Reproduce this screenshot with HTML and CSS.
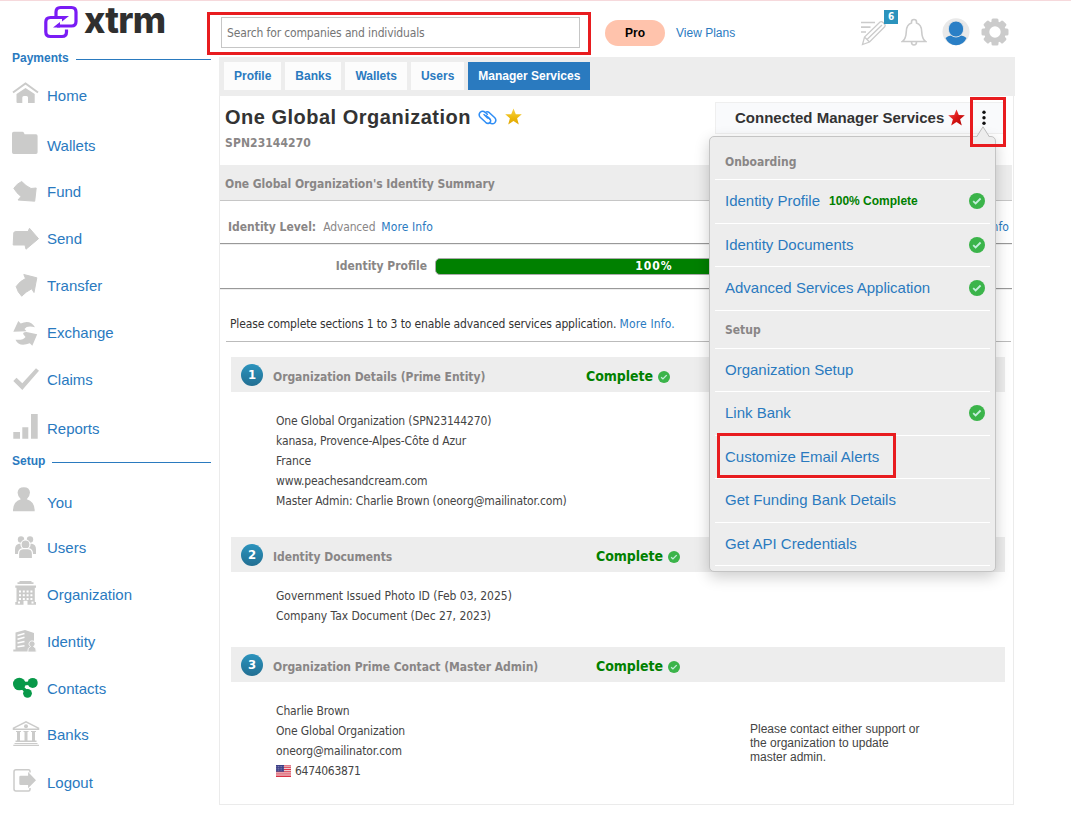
FILE: index.html
```html
<!DOCTYPE html>
<html lang="en">
<head>
<meta charset="utf-8">
<title>XTRM - Manager Services</title>
<link rel="stylesheet" href="styles.css">
</head>
<body>
<svg class="defs" aria-hidden="true">
  <symbol id="ok" viewBox="0 0 16 16"><circle cx="8" cy="8" r="8" fill="#3bb44a"/><path d="M4.2 8.2l2.4 2.3 5-5" fill="none" stroke="#c4eedb" stroke-width="1.8"/></symbol>
</svg>
<div class="page">
  <aside class="side">
    <div class="logo">
      <svg width="36" height="34" viewBox="0 0 36 34" fill="none" stroke="#7a1cf5" stroke-width="3.2"><path d="M13 11V7Q13 2.500 17.500 2.500H28.500Q33 2.500 33 7V16.500Q33 21 28.500 21H14"/><path d="M23.500 24.500V27Q23.500 31.500 19 31.500H7.500Q2.800 31.500 2.800 27V17Q2.800 12.500 7.500 12.500H22"/><path d="M10 22.500L17 17v5.500zM26 11L19 16.500V11z" fill="#7a1cf5" stroke="none"/></svg>
      <span class="brand">xtrm</span>
    </div>
    <h2 class="group"><span>Payments</span></h2>
    <ul class="nav">
      <li class="first"><svg viewBox="0 0 30 40"><path d="M3 16.500L15.500 7.500 28 16.500" fill="none" stroke="#cbcbca" stroke-width="2"/><path d="M6.500 18L15.500 12l9.200 6v9H18v-5.500q0-1.500-1.500-1.500h-2.700q-1.500 0-1.500 1.500V27H7.500q-1 0-1-1z"/></svg><a>Home</a></li>
      <li class="gap10"><svg viewBox="0 0 30 40"><path d="M2 7.500q0-1.700 1.700-1.700h8.800q1 0 1.500 1.200l.6 1.200h11.400q1.600 0 1.600 1.700v16.300q0 1.800-1.600 1.800H3.700Q2 28 2 26.200z"/></svg><a>Wallets</a></li>
      <li class="gap6"><svg viewBox="0 0 30 40"><path class="soft" d="M3.800 16.300Q7 11.500 11.700 9.500q4 4.500 9.300 7l5.200-.5-1.500 13.200L8 28l3-3.500Q6.500 21 3.800 16.300z"/></svg><a>Fund</a></li>
      <li><svg viewBox="0 0 30 40"><path class="soft" d="M3.800 13.500l1.500-1H18l1.500-3.200L28.500 19.700 16 30.200 15 26H3.200z"/></svg><a>Send</a></li>
      <li><svg viewBox="0 0 30 40"><path class="soft" d="M6.200 20.500Q10 15 15.500 12.500l-1.700-4 13 3.300L24 26.500l-2.300-3.700q-6 3-10 7.400Q7.500 26 6.200 20.500z"/></svg><a>Transfer</a></li>
      <li><svg viewBox="0 0 30 40"><path d="M3.300 18.700L8.300 8l2.400 2.500Q20 6 25 14.300q-8-2-10.500 1.700l2 2.200z"/><path d="M27.200 21.300L22.300 32.700l-2.500-2.400Q9 34.500 5.500 26.700 13 27.500 15.500 24l-2-2.500q-1.500-2.500 3-2.500z"/></svg><a>Exchange</a></li>
      <li><svg viewBox="0 0 30 40"><path d="M3.300 21l3.200-3.300 5.800 5.600L26 8.300l3 2.500L12.300 30z"/></svg><a>Claims</a></li>
      <li class="gap9"><svg viewBox="0 0 30 40"><path d="M3.300 23H10v6.700H3.300zM12.300 18.300h6v11.400h-6zM21 5h6.700v24.700H21z"/></svg><a>Reports</a></li>
    </ul>
    <h2 class="group setup"><span>Setup</span></h2>
    <ul class="nav">
      <li class="first2"><svg viewBox="0 0 30 40"><path d="M3 28.300Q2.800 18.500 10.800 16.300 7.500 13 7.600 9.500 8 4.300 13.800 4.200q5.800.1 6.200 5.300 0 3.500-3.200 6.800 8 2.200 7.900 12z"/></svg><a>You</a></li>
      <li class="gap5"><svg viewBox="0 0 30 40"><circle cx="11" cy="11.500" r="3.200"/><circle cx="20" cy="11.500" r="3.200"/><path d="M5 26v-4.500q0-5 4-5.800h13q4 .8 4 5.800V26z"/><circle cx="15.500" cy="16.500" r="4.500" stroke="#fff" stroke-width="1.200"/><path d="M8.500 30.500V26q0-5 4.500-5.300h5q4.500.3 4.500 5.300v4.500z" stroke="#fff" stroke-width="1.200"/></svg><a>Users</a></li>
      <li><svg viewBox="0 0 30 40"><path d="M9.500 6h12v1.200h2V9h-16V7.200h2z"/><path d="M5.300 10.500H26v2.200H5.300zM6.500 12.700h18.300v14.300H26v2.700H17.500v-4h-4v4H5.300V27h1.200z"/><path d="M9 15.500h2v2H9zm3.800 0h2v2h-2zm3.800 0h2v2h-2zm3.800 0h2v2h-2zM9 19.300h2v2H9zm3.800 0h2v2h-2zm3.800 0h2v2h-2zm3.800 0h2v2h-2zM9 23h2v2H9zm3.800 0h2v2h-2zm3.800 0h2v2h-2zm3.800 0h2v2h-2zM8 26.500h2v2H8zm13.500 0h2v2h-2z" fill="#fff"/></svg><a>Organization</a></li>
      <li><svg viewBox="0 0 30 40"><path d="M5.500 10.500L15 8l9 3v7.500l-3 2-1.500 9H3.300v-2h2.200z"/><path d="M7.500 13.500l7-2M7.500 17.200l7-2M7.500 21l7-1.500M7.500 24.800l7-1" stroke="#fff" stroke-width="1.500"/><path d="M17.800 30q-.3-4.500 2.700-5.500-2-1.500-1.500-3.300.8-2.400 3-2.400t3 2.400q.5 1.800-1.500 3.300 3 1 2.700 5.500z" stroke="#fff" stroke-width=".8"/></svg><a>Identity</a></li>
      <li><svg viewBox="0 0 30 40" class="green"><circle cx="9.300" cy="15" r="6.300"/><circle cx="22.700" cy="13.900" r="5"/><circle cx="17.500" cy="24.300" r="4.400"/><path d="M10 15l12-1M10.500 17l7 6.500" stroke="#089949" stroke-width="3.400"/></svg><a>Contacts</a></li>
      <li class="gap6"><svg viewBox="0 0 30 40"><path d="M3.500 13.200L16 6.800l12.500 6.400v1H3.500z" fill="none" stroke="#cbcbca" stroke-width="1.500"/><circle cx="16" cy="11.300" r="2"/><path d="M6 16h5v1H6zm7.500 0h5v1h-5zm7.500 0h5v1h-5zM7 17h3v8.500H7zm7.500 0h3v8.500h-3zm7.500 0h3v8.500h-3zM5.500 25.500h21V27h-21zM4.500 28h23v1h-23zM3.300 29.700H29V31H3.300z"/></svg><a>Banks</a></li>
      <li class="gap8"><svg viewBox="0 0 30 40"><path d="M20 9.500V8.300q0-1.500-1.500-1.500H6Q4 6.800 4 8.800V26q0 2 2 2h12.500q1.500 0 1.500-1.500V25" fill="none" stroke="#cbcbca" stroke-width="1.500"/><path d="M9.300 14q0-1.300 1.300-1.300h7.500V9L26 17.300l-7.900 8V22h-7.500q-1.300 0-1.300-1.300z"/></svg><a>Logout</a></li>
    </ul>
  </aside>
  <main class="main">
    <header class="top">
      <div class="search">Search for companies and individuals</div>
      <span class="plan">Pro</span>
      <a class="view">View Plans</a>
      <div class="tools">
        <div class="note-icon">
          <svg width="28" height="28" viewBox="0 0 28 28" fill="none" stroke="#cbcbcb" stroke-width="1.300"><path d="M0 3.500h14M0 8.200h9.500M0 13h5" stroke-width="1.700"/><path d="M1.500 25.500L3.500 18 19 3q1.500-1 3 .5l1.700 1.700q1 1.300 0 2.600L8.500 23zM3.500 18l5 5M6 20.500L21 6"/></svg>
          <span class="count">6</span>
        </div>
        <svg class="bell" width="26" height="28" viewBox="0 0 26 28" fill="none" stroke="#cbcbcb" stroke-width="1.600"><path d="M1.500 23.500Q5 21 5.300 13.500 5.500 6.500 10.500 5V4q0-2.500 2.500-2.500T15.500 4v1q5 1.500 5.200 8.500.3 7.500 3.800 10zM10.500 24q0 3 2.500 3t2.500-3"/></svg>
        <svg class="user" width="28" height="28" viewBox="0 0 28 28"><circle cx="14" cy="13.800" r="13.500" fill="#e9e9e9"/><path d="M3.500 20Q6 17.500 9 17.500h10q3 0 5.500 2.500-3 7.200-10.500 7.200T3.500 20z" fill="#2a7fc6"/><ellipse cx="14" cy="11" rx="7.700" ry="8" fill="#2a7fc6" stroke="#e9e9e9" stroke-width=".9"/></svg>
        <svg class="gear" width="28" height="28" viewBox="0 0 28 28"><g fill="#cbcbcb"><rect x="10.500" y=".5" width="7" height="27" rx="1.500"/><rect x="10.500" y=".5" width="7" height="27" rx="1.500" transform="rotate(45 14 14)"/><rect x="10.500" y=".5" width="7" height="27" rx="1.500" transform="rotate(90 14 14)"/><rect x="10.500" y=".5" width="7" height="27" rx="1.500" transform="rotate(135 14 14)"/><circle cx="14" cy="14" r="10.800"/></g><circle cx="14" cy="14" r="5.700" fill="#fff"/></svg>
      </div>
    </header>
    <nav class="tabs"><a>Profile</a><a>Banks</a><a>Wallets</a><a>Users</a><a class="on">Manager Services</a></nav>
    <section class="panel">
      <div class="head">
        <div>
          <h1>One Global Organization
            <svg class="clip" width="19" height="15" viewBox="0 0 19 15" fill="none" stroke="#2e8df5" stroke-width="1.500" stroke-linecap="round"><path d="M9.300 4.300L7.200 2.300Q4.500.2 2.200 2.300.1 4.800 2.200 7.200L7.600 12.300Q10 14.300 12 12.600 13.500 10.700 11.800 8.900L8 5.500"/><path d="M11.500 12.500Q14.500 15 16.800 12.700 18.900 10.200 16.800 7.800L11.400 2.700Q9.700 1.300 8.300 1.900"/><path d="M6 4.500L9.500 8M9.500 7L12 9.300"/></svg>
            <svg class="star" width="17" height="17" viewBox="0 0 17 17"><defs><linearGradient id="gold" x2="0" y2="1"><stop offset="0" stop-color="#f8d54a"/><stop offset=".6" stop-color="#ecb80a"/><stop offset="1" stop-color="#dfa505"/></linearGradient></defs><path d="M8.500.5l2.300 5.700 6 .1-4.700 4 1.700 6.200-5.300-3.600-5.300 3.600 1.700-6.200-4.700-4 6-.1z" fill="url(#gold)"/></svg>
          </h1>
          <div class="spn">SPN23144270</div>
        </div>
        <div class="connected">
          <span>Connected Manager Services</span>
          <svg width="17" height="17" viewBox="0 0 17 17"><defs><linearGradient id="red" x2="1" y2="1"><stop offset="0" stop-color="#ff5a55"/><stop offset=".5" stop-color="#d91414"/><stop offset="1" stop-color="#a80505"/></linearGradient></defs><path d="M8.500.5l2.300 5.500 6 .3-4.700 4 1.700 6.200-5.300-3.600-5.300 3.600 1.700-6.200-4.700-4 6-.3z" fill="url(#red)"/></svg>
          <svg class="dots" width="4" height="16" viewBox="0 0 4 16"><circle cx="2" cy="2.200" r="1.700"/><circle cx="2" cy="7.700" r="1.700"/><circle cx="2" cy="13.200" r="1.700"/></svg>
        </div>
      </div>
      <div class="summary">One Global Organization's Identity Summary</div>
      <div class="level"><b>Identity Level:</b><span>Advanced</span><a>More Info</a><span class="right">Advanced Services Status: Approved</span><a>More Info</a></div>
      <div class="profile"><b>Identity Profile</b><div class="bar">100%</div></div>
      <p class="hint">Please complete sections 1 to 3 to enable advanced services application. <a>More Info.</a></p>
      <div class="step one"><i>1</i><b>Organization Details (Prime Entity)</b><strong>Complete</strong><svg width="12" height="12"><use href="#ok"/></svg></div>
      <div class="body first-body">
        <div>One Global Organization (SPN23144270)</div><div>kanasa, Provence-Alpes-Côte d Azur</div><div>France</div><div>www.peachesandcream.com</div><div>Master Admin: Charlie Brown (oneorg@mailinator.com)</div>
      </div>
      <div class="step"><i>2</i><b>Identity Documents</b><strong>Complete</strong><svg width="12" height="12"><use href="#ok"/></svg></div>
      <div class="body docs"><div>Government Issued Photo ID (Feb 03, 2025)</div><div>Company Tax Document (Dec 27, 2023)</div></div>
      <div class="step"><i>3</i><b>Organization Prime Contact (Master Admin)</b><strong>Complete</strong><svg width="12" height="12"><use href="#ok"/></svg></div>
      <div class="body contact">
        <div class="person"><div>Charlie Brown</div><div>One Global Organization</div><div>oneorg@mailinator.com</div>
          <div class="phone"><svg width="15" height="12" viewBox="0 0 15 12"><path fill="#f4f4f4" d="M0 0h15v12H0z"/><path d="M0 .9h15M0 2.700h15M0 4.500h15M0 6.300h15M0 8.100h15M0 10h15M0 11.500h15" stroke="#d8263c" stroke-width=".95"/><path fill="#3c3f86" d="M0 0h8v6.700H0z"/><path d="M.5 1.500h7M.5 3.300h7M.5 5.100h7" stroke="#a9abd0" stroke-width=".7" stroke-dasharray=".8 .8"/></svg>6474063871</div>
        </div>
        <p class="support">Please contact either support or the organization to update master admin.</p>
      </div>
    </section>
  </main>
</div>
<div class="menu">
  <svg class="arrow" width="14" height="12" viewBox="0 0 14 12"><path d="M.5 11L7 .8 13.500 11" fill="#ededed" stroke="#bbb"/><path fill="#ededed" d="M1 11h12v1H1z"/></svg>
  <div class="cap">Onboarding</div>
  <a>Identity Profile<small>100% Complete</small><svg width="16" height="16"><use href="#ok"/></svg></a>
  <a>Identity Documents<svg width="16" height="16"><use href="#ok"/></svg></a>
  <a>Advanced Services Application<svg width="16" height="16"><use href="#ok"/></svg></a>
  <div class="cap">Setup</div>
  <a>Organization Setup</a>
  <a>Link Bank<svg width="16" height="16"><use href="#ok"/></svg></a>
  <a>Customize Email Alerts</a>
  <a>Get Funding Bank Details</a>
  <a>Get API Credentials</a>
</div>
<div class="mark mark-search"></div>
<div class="mark mark-dots"></div>
<div class="mark mark-alerts"></div>
</body>
</html>
```
FILE: styles.css
```css
* { box-sizing: border-box; }
body { margin: 0; height: 820px; overflow: hidden; background: #fff; color: #444; position: relative; border-top: 1px solid #f6d9dc; font: 12px/20px "DejaVu Sans Condensed", "DejaVu Sans", sans-serif; font-stretch: condensed; letter-spacing: -.14px; }
a { color: #2a7abf; }
h1, h2, ul, p { margin: 0; padding: 0; }
svg { flex: none; display: block; }
.defs { position: absolute; width: 0; height: 0; }
.page { display: flex; }
.side { width: 219px; flex: none; font-family: "Liberation Sans", Arial, sans-serif; letter-spacing: 0; }
.logo { display: flex; height: 46px; padding: 4px 0 0 43px; }
.brand { font: 800 36px/36px Inter, sans-serif; color: #2f2f2f; margin: -3px 0 0 5px; letter-spacing: -.7px; }
.group { display: flex; align-items: center; gap: 7px; height: 22px; margin: 0 8px 0 12px; font-size: 12px; line-height: 22px; color: #2a7abf; }
.group::after { content: ""; height: 1px; flex: 1; background: #2a7abf; margin-top: 2px; }
.group.setup { height: 24px; }
.nav { list-style: none; }
.nav li { display: flex; align-items: center; height: 40px; margin-top: 7px; padding-left: 10px; font-size: 15px; }
.nav svg { width: 30px; height: 40px; margin-right: 7px; fill: #cbcbca; }
.nav .soft { stroke: #cbcbca; stroke-width: 1; stroke-linejoin: round; }
.nav .green { fill: #089949; }
.nav .first { margin-top: 7px; }
.nav .first2 { margin-top: 10px; }
.nav .gap5 { margin-top: 5px; }
.nav .gap6 { margin-top: 6px; }
.nav .gap8 { margin-top: 8px; }
.nav .gap9 { margin-top: 9px; }
.nav .gap10 { margin-top: 10px; }
.main { width: 796px; flex: none; }
.top { display: flex; height: 56px; align-items: flex-start; padding: 16px 0 0 2px; }
.search { width: 359px; height: 31px; border: 1px solid #c6c6c6; padding-left: 5px; line-height: 31px; color: #757575; }
.plan { width: 60px; height: 26px; margin: 3px 0 0 25px; border-radius: 13px; background: #ffc3ac; color: #000; font: bold 12px/26px "Liberation Sans", Arial, sans-serif; letter-spacing: 0; text-align: center; }
.view { font: 12px/26px "Liberation Sans", Arial, sans-serif; letter-spacing: 0; margin: 3px 0 0 11px; }
.tools { display: flex; margin-left: auto; padding-right: 6px; }
.note-icon { position: relative; margin-top: 2px; }
.count { position: absolute; left: 23px; top: -9px; width: 14px; height: 14px; background: #2b93bd; color: #fff; font-weight: bold; font-size: 10px; line-height: 14px; text-align: center; }
.bell { margin: 1px 0 0 12px; }
.user { margin: 1px 0 0 15px; }
.gear { margin: 1px 0 0 11px; }
.tabs { display: flex; gap: 4px; height: 39px; padding: 5px; background: #ededed; font: bold 12px/28px "Liberation Sans", Arial, sans-serif; letter-spacing: 0; }
.tabs a { height: 28px; padding: 0 10px; background: #fcfcfc; }
.tabs .on { background: #2a7abf; color: #fff; }
.panel { width: 795px; height: 709px; border: solid #ebebeb; border-width: 0 1px 1px; }
.head { display: flex; justify-content: space-between; height: 69px; padding: 6px 8px 0 5px; }
h1 { display: flex; align-items: center; height: 30px; font: bold 20px/30px "Liberation Sans", Arial, sans-serif; letter-spacing: .5px; color: #333; }
.clip { margin: 0 0 0 7px; }
.star { margin: 0 0 1px 8px; }
.spn { color: #898686; font-weight: bold; line-height: 22px; letter-spacing: .1px; }
.connected { display: flex; align-items: center; width: 290px; height: 32px; border: 1px solid #efefef; background: #f9fafc; padding-left: 19px; color: #333; font: bold 15px/30px "Liberation Sans", Arial, sans-serif; letter-spacing: 0; }
.connected svg { margin: 0 0 2px 4px; }
.connected .dots { margin: 0 0 0 17px; fill: #111; }
.summary { height: 36px; width: 792px; background: #ededed; border-bottom: 1px solid #c6c6c6; padding-left: 5px; line-height: 38px; font-weight: bold; color: #898686; letter-spacing: -.04px; }
.level { display: flex; height: 43px; width: 792px; border-bottom: 1px solid #999; box-shadow: 0 1px #eee; padding: 0 3px 0 8px; line-height: 53px; color: #898686; }
.level b, .profile b { letter-spacing: 0; }
.level span { margin: 0 6px 0 7px; }
.level a { letter-spacing: .1px; }
.level .right { margin-left: auto; }
.profile { display: flex; align-items: center; height: 45px; width: 792px; border-bottom: 1px solid #999; box-shadow: 0 1px #eee; color: #898686; }
.profile b { width: 207px; text-align: right; }
.bar { width: 438px; height: 17px; margin-left: 8px; border: 1px solid #aaa; border-radius: 5px; background: #008000; color: #fff; font-weight: bold; text-align: center; line-height: 15px; letter-spacing: 1px; }
.hint { margin: 0 2px 15px 6px; height: 53px; border-bottom: 1px solid #bbb; padding: 25px 0 0 4px; color: #333; }
.hint a { letter-spacing: .15px; }
.step { display: flex; align-items: center; width: 774px; height: 35px; margin-left: 11px; background: #ededed; padding-left: 10px; }
.step i { width: 22px; height: 22px; border-radius: 50%; background: linear-gradient(#2b93bd, #226f92); color: #fff; font-style: normal; font-weight: bold; font-size: 13px; line-height: 22px; text-align: center; letter-spacing: 0; }
.step b { width: 323px; margin-left: 10px; padding-top: 4px; color: #898686; letter-spacing: -.04px; }
.one b { width: 313px; }
.step strong { color: #008000; font-size: 14px; padding-top: 2px; letter-spacing: -.05px; }
.step svg { margin: 4px 0 0 5px; }
.body { padding: 19px 0 0 56px; color: #444; }
.first-body { height: 145px; }
.docs { height: 75px; padding-top: 14px; letter-spacing: -.03px; }
.contact { display: flex; }
.person { width: 474px; }
.phone { display: flex; align-items: center; gap: 4px; letter-spacing: -.3px; }
.support { width: 175px; padding-top: 21px; font: 12px/14px "Liberation Sans", Arial, sans-serif; letter-spacing: 0; }
.menu { position: absolute; left: 709px; top: 135px; width: 287px; height: 436px; padding: 5px; background: #ededed; border: 1px solid #c4c4c4; border-radius: 5px; box-shadow: 0 5px 15px rgba(0, 0, 0, .2); font: 15px/43px "Liberation Sans", Arial, sans-serif; letter-spacing: 0; }
.menu a, .cap { display: flex; align-items: center; height: 43.5px; border-bottom: 1px solid #fff; padding: 0 5px 1px 10px; }
.menu .cap { height: 38px; padding: 3px 5px 0 10px; font: bold 12px/35px "DejaVu Sans Condensed", "DejaVu Sans", sans-serif; color: #898686; letter-spacing: 0; }
.menu small { font-weight: bold; font-size: 12px; color: #008000; margin: 1px 0 0 9px; }
.menu a svg { margin: 1px 0 0 auto; }
.arrow { position: absolute; left: 266px; top: -11px; }
.mark { position: absolute; border: 3px solid #e81c1f; }
.mark-search { left: 207px; top: 11px; width: 384px; height: 43px; }
.mark-dots { left: 970px; top: 96px; width: 36px; height: 50px; }
.mark-alerts { left: 717px; top: 432px; width: 179px; height: 45px; }
```
